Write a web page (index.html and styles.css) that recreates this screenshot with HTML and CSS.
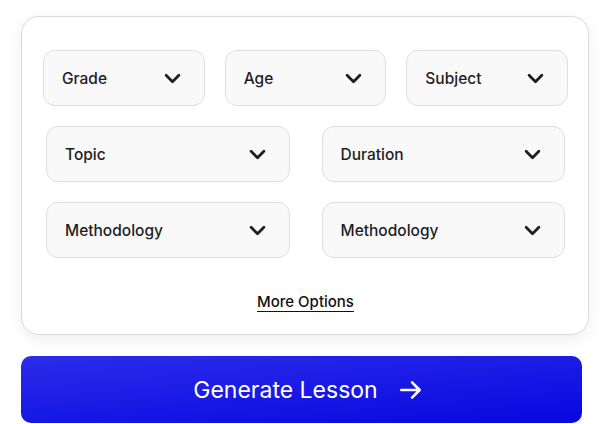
FILE: index.html
```html
<!DOCTYPE html>
<html lang="en">
<head>
  <meta charset="UTF-8" />
  <meta name="viewport" content="width=device-width, initial-scale=1" />
  <title>Lesson Generator</title>
  <link rel="stylesheet" href="styles.css">
</head>
<body>
  <div class="wrap">
    <div class="card">
      <div class="row row-3">
        <div class="select"><span>Grade</span><svg viewBox="0 0 16 10"><polyline points="2,2 8,8 14,2" /></svg></div>
        <div class="select"><span>Age</span><svg viewBox="0 0 16 10"><polyline points="2,2 8,8 14,2" /></svg></div>
        <div class="select"><span>Subject</span><svg viewBox="0 0 16 10"><polyline points="2,2 8,8 14,2" /></svg></div>
      </div>
      <div class="row row-2">
        <div class="select"><span>Topic</span><svg viewBox="0 0 16 10"><polyline points="2,2 8,8 14,2" /></svg></div>
        <div class="select"><span>Duration</span><svg viewBox="0 0 16 10"><polyline points="2,2 8,8 14,2" /></svg></div>
      </div>
      <div class="row row-2">
        <div class="select"><span>Methodology</span><svg viewBox="0 0 16 10"><polyline points="2,2 8,8 14,2" /></svg></div>
        <div class="select"><span>Methodology</span><svg viewBox="0 0 16 10"><polyline points="2,2 8,8 14,2" /></svg></div>
      </div>
      <a class="more" href="#">More Options</a>
    </div>
    <button class="generate">
      <span>Generate Lesson</span>
      <svg class="arrow" viewBox="0 0 24 24"><path d="M3 12h17M13 5l7 7-7 7" /></svg>
    </button>
  </div>
</body>
</html>
```

FILE: styles.css
```css
body { margin: 0; background: #fff; font-family: Inter, "Noto Sans", sans-serif; }
.wrap { padding: 16px 0 0 21px; }
.card { width: 568px; box-sizing: border-box; padding: 33px 20px 22px 21px; background: #fff; border: 1px solid #dadada; border-radius: 18px; box-shadow: 0 4px 16px rgba(0,0,0,0.07); }
.row { display: grid; gap: 20px; margin-bottom: 20px; }
.row-3 { grid-template-columns: repeat(3, 1fr); }
.row-2 { grid-template-columns: 1fr 1fr; gap: 32px; margin: 0 3px 20px 3px; }
.card .row:last-of-type { margin-bottom: 0; }
.select { height: 56px; box-sizing: border-box; display: flex; align-items: center; justify-content: space-between; padding: 0 23px 0 18px; background: #f9f9f9; border: 1px solid #dedede; border-radius: 12px; font-size: 15.5px; font-weight: 500; color: #1e1e1e; }
.select svg { width: 17px; height: 11px; fill: none; stroke: #1e1e1e; stroke-width: 2.6; stroke-linecap: round; stroke-linejoin: round; }
.more { display: block; width: max-content; margin: 34px auto 0; line-height: 20px; font-size: 15px; font-weight: 500; color: #111; text-decoration: underline; text-underline-offset: 4px; text-decoration-thickness: 1px; }
.generate { display: flex; align-items: center; justify-content: center; gap: 20px; margin-top: 21px; width: 561px; height: 67px; padding: 0 0 0 14px; border: none; border-radius: 10px; background: linear-gradient(175deg, #2c2ceb, #0707df); color: #fff; font-family: inherit; font-size: 23px; font-weight: 400; cursor: pointer; }
.arrow { width: 26px; height: 26px; fill: none; stroke: #fff; stroke-width: 2.4; stroke-linecap: round; stroke-linejoin: round; }
```
